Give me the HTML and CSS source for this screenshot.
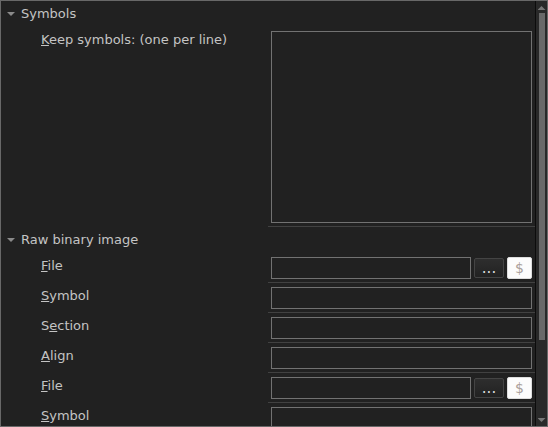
FILE: index.html
```html
<!DOCTYPE html>
<html lang="en">
<head>
<meta charset="utf-8">
<title>Linker settings</title>
<link rel="stylesheet" href="styles.css">
</head>
<body>
<main class="panel">
  <form class="options">
    <section>
      <h2 class="heading"><span class="arrow"></span>Symbols</h2>
      <div class="row">
        <label class="label" for="keep"><u>K</u>eep symbols: (one per line)</label>
        <div class="control"><textarea class="box area" id="keep"></textarea></div>
      </div>
    </section>
    <section>
      <h2 class="heading"><span class="arrow"></span>Raw binary image</h2>
      <div class="row">
        <label class="label" for="file1"><u>F</u>ile</label>
        <div class="control">
          <input class="box" id="file1" type="text">
          <button class="browse" type="button">...</button>
          <button class="variable" type="button">$</button>
        </div>
      </div>
      <div class="row">
        <label class="label" for="symbol1"><u>S</u>ymbol</label>
        <div class="control"><input class="box" id="symbol1" type="text"></div>
      </div>
      <div class="row">
        <label class="label" for="section1">S<u>e</u>ction</label>
        <div class="control"><input class="box" id="section1" type="text"></div>
      </div>
      <div class="row">
        <label class="label" for="align1"><u>A</u>lign</label>
        <div class="control"><input class="box" id="align1" type="text"></div>
      </div>
      <div class="row">
        <label class="label" for="file2"><u>F</u>ile</label>
        <div class="control">
          <input class="box" id="file2" type="text">
          <button class="browse" type="button">...</button>
          <button class="variable" type="button">$</button>
        </div>
      </div>
      <div class="row">
        <label class="label" for="symbol2"><u>S</u>ymbol</label>
        <div class="control"><input class="box" id="symbol2" type="text"></div>
      </div>
    </section>
  </form>
  <div class="scrollbar">
    <span class="step up"></span>
    <div class="track"><div class="thumb"></div></div>
    <span class="step down"></span>
  </div>
</main>
</body>
</html>
```
FILE: styles.css
```css
* {
  box-sizing: border-box;
}

body {
  margin: 0;
  background: #212121;
  color: #c4c4c4;
  font: 13px/16px "DejaVu Sans", Verdana, sans-serif;
}

.panel {
  display: flex;
  height: 100vh;
  border: 1px solid #686868;
  overflow: hidden;
}

.options {
  flex: 1;
  min-width: 0;
}

.heading {
  display: flex;
  align-items: center;
  gap: 6px;
  height: 26px;
  margin: 0;
  padding-left: 6px;
  font-size: 13px;
  font-weight: normal;
}

.arrow {
  width: 8px;
  height: 4px;
  background: #8a8a8a;
  clip-path: polygon(0 0, 100% 0, 50% 100%);
}

.row {
  display: grid;
  grid-template-columns: 1fr 1fr;
}

.label {
  padding: 5px 0 0 40px;
  white-space: nowrap;
}

.label u {
  text-underline-offset: 1px;
  text-decoration-thickness: 1px;
}

.control {
  display: flex;
  gap: 3px;
  padding: 4px 3px 3px;
  border-bottom: 1px solid #414141;
}

.box {
  flex: 1;
  min-width: 0;
  height: 22px;
  margin: 0;
  padding: 2px 4px;
  border: 1px solid #727272;
  border-radius: 0;
  outline: none;
  background: #212121;
  color: inherit;
  font: inherit;
}

.area {
  height: 192px;
  resize: none;
}

.browse,
.variable {
  margin: 0;
  padding: 0;
  font: inherit;
  text-align: center;
}

.browse {
  width: 30px;
  height: 20px;
  margin-top: 1px;
  border: 1px solid #444;
  border-radius: 2px;
  background: linear-gradient(#2e2e2e, #222);
  color: #ddd;
  font-size: 15px;
  line-height: 16px;
}

.variable {
  width: 25px;
  height: 22px;
  border: 1px solid #ddd;
  border-radius: 2px;
  background: #fcfcfc;
  color: #aaa09a;
  font-size: 14px;
}

.scrollbar {
  display: flex;
  flex-direction: column;
  width: 12px;
  border-left: 1px solid #0c0c0c;
  background: #292929;
}

.step {
  flex: none;
  align-self: center;
  width: 8px;
  height: 4px;
  background: #777;
}

.up {
  margin: 5px 0 3px;
  clip-path: polygon(50% 0, 100% 100%, 0 100%);
}

.down {
  margin: 6px 0 4px;
  clip-path: polygon(0 0, 100% 0, 50% 100%);
}

.track {
  flex: 1;
  padding: 0 2px 0 3px;
}

.thumb {
  height: 82%;
  background: #696969;
}
```
